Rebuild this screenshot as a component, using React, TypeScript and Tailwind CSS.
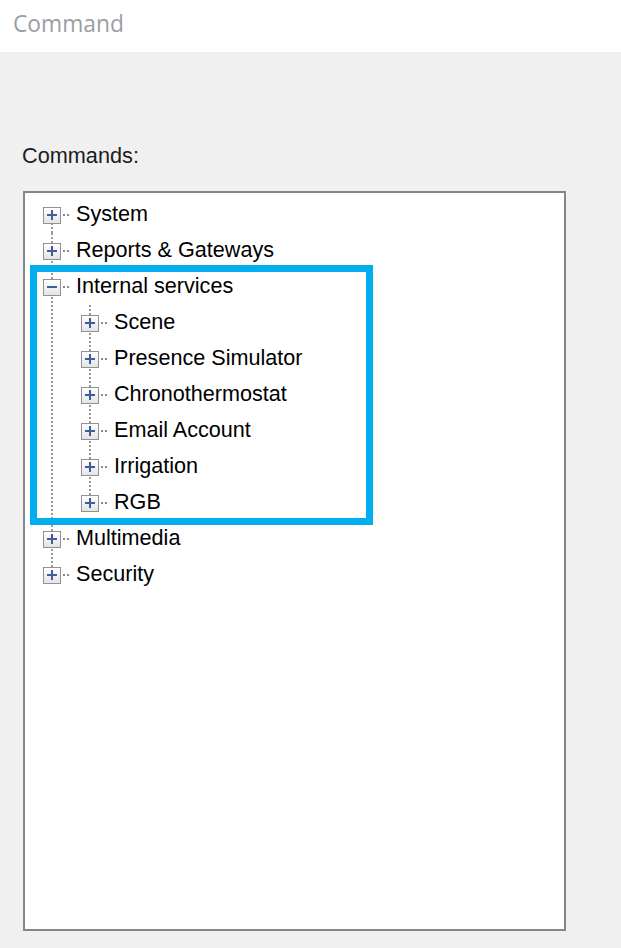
import React from "react";

type Node = { label: string; expanded?: boolean; children?: Node[] };

const tree: Node[] = [
  { label: "System" },
  { label: "Reports & Gateways" },
  {
    label: "Internal services",
    expanded: true,
    children: [
      { label: "Scene" },
      { label: "Presence Simulator" },
      { label: "Chronothermostat" },
      { label: "Email Account" },
      { label: "Irrigation" },
      { label: "RGB" },
    ],
  },
  { label: "Multimedia" },
  { label: "Security" },
];

type Seg = "none" | "full" | "top" | "bottom";

function VLine({ seg }: { seg: Seg }) {
  if (seg === "none") return null;
  const cls =
    seg === "full"
      ? "top-0 bottom-0"
      : seg === "top"
      ? "top-0 h-[18px]"
      : "top-[18px] bottom-0";
  return (
    <div
      className={`absolute left-[18px] w-[2px] ${cls} bg-[linear-gradient(to_bottom,#9a9a9a_50%,transparent_50%)] bg-[length:2px_4px]`}
    />
  );
}

function Expander({ expanded }: { expanded?: boolean }) {
  return (
    <div className="relative z-10 w-[18px] h-[17px] ml-[10px] border border-[#919191] bg-[linear-gradient(to_bottom,#ffffff,#e4e4e4)] flex items-center justify-center">
      <div className="relative w-[10px] h-[2px] bg-[#3d5d9e]">
        {!expanded && (
          <div className="absolute left-[4px] top-[-4px] w-[2px] h-[10px] bg-[#3d5d9e]" />
        )}
      </div>
    </div>
  );
}

function Row({
  label,
  expanded,
  guides,
  own,
}: {
  label: string;
  expanded?: boolean;
  guides: Seg[];
  own: Seg;
}) {
  return (
    <div className="flex items-center h-[36px]">
      {guides.map((g, i) => (
        <div key={i} className="relative w-[38px] h-full shrink-0">
          <VLine seg={g} />
        </div>
      ))}
      <div className="relative w-[38px] h-full shrink-0 flex items-center">
        <VLine seg={own} />
        <Expander expanded={expanded} />
        <div className="ml-[2px] w-[7px] h-[2px] bg-[linear-gradient(to_right,#8a8a8a_50%,transparent_50%)] bg-[length:4px_2px]" />
      </div>
      <span className="ml-[5px] -mt-[2px] text-[21.6px] leading-none text-black whitespace-nowrap font-['Liberation_Sans',Arial,sans-serif]">
        {label}
      </span>
    </div>
  );
}

export default function App() {
  const rows: React.ReactNode[] = [];
  tree.forEach((n, i) => {
    const first = i === 0;
    const last = i === tree.length - 1;
    const own: Seg = first ? "bottom" : last ? "top" : "full";
    rows.push(
      <Row key={n.label} label={n.label} expanded={n.expanded} guides={[]} own={own} />
    );
    if (n.expanded && n.children) {
      n.children.forEach((c, j) => {
        const cLast = j === n.children!.length - 1;
        rows.push(
          <Row
            key={c.label}
            label={c.label}
            guides={[last ? "none" : "full"]}
            own={cLast ? "top" : "full"}
          />
        );
      });
    }
  });

  return (
    <div className="w-[621px] h-[948px] bg-[#f0f0f0] flex flex-col overflow-hidden">
      <div className="h-[52px] bg-white pl-[13px] flex items-center shrink-0">
        <span className="text-[22.8px] text-[#9b9ea2] font-['Open_Sans','Noto_Sans',sans-serif] leading-none -mt-[3px]">
          Command
        </span>
      </div>
      <div className="flex-1 pl-[23px] pt-[92px]">
        <div className="ml-[-1px] h-[24px] text-[21.7px] leading-[24px] text-[#1c1c1c] font-['Liberation_Sans',Arial,sans-serif]">
          Commands:
        </div>
        <div className="relative mt-[23px] w-[543px] h-[740px] border-2 border-[#82868e] bg-white pt-[4px] pl-[8px]">
          {rows}
          <div className="absolute left-[5px] top-[72px] w-[343px] h-[260px] border-[7px] border-[#00adef] pointer-events-none" />
        </div>
      </div>
    </div>
  );
}
